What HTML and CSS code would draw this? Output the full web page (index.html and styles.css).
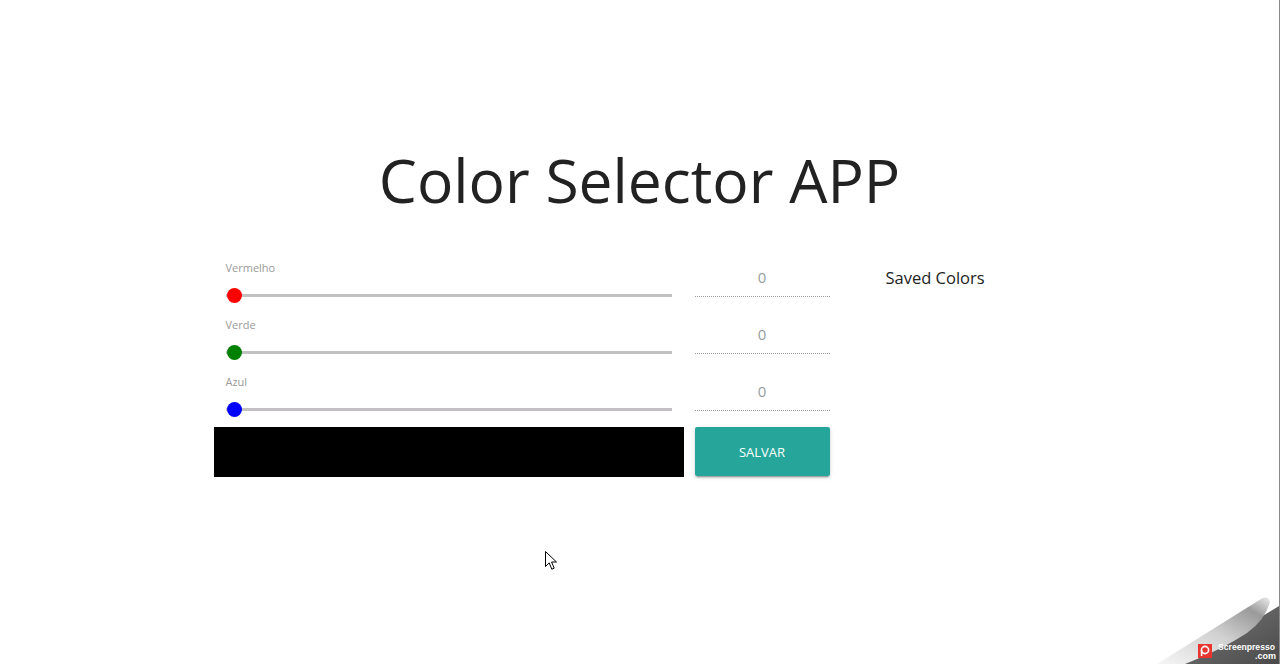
FILE: index.html
```html
<!DOCTYPE html>
<html lang="pt">
<head>
<meta charset="utf-8">
<title>Color Selector APP</title>
<link rel="stylesheet" href="styles.css">
</head>
<body>
<div class="page">
  <div class="container">
    <h1 class="title">Color Selector APP</h1>
    <div class="row">
      <div class="col-sliders">
        <div class="slider-group">
          <div class="slider-label">Vermelho</div>
          <div class="track"><span class="thumb thumb-red"></span></div>
        </div>
        <div class="slider-group">
          <div class="slider-label">Verde</div>
          <div class="track"><span class="thumb thumb-green"></span></div>
        </div>
        <div class="slider-group">
          <div class="slider-label">Azul</div>
          <div class="track"><span class="thumb thumb-blue"></span></div>
        </div>
        <div class="preview"></div>
      </div>
      <div class="col-inputs">
        <div class="input-group"><div class="num-input">0</div></div>
        <div class="input-group"><div class="num-input">0</div></div>
        <div class="input-group"><div class="num-input">0</div></div>
        <button class="btn-save">SALVAR</button>
      </div>
      <div class="col-saved">
        <div class="saved-title">Saved Colors</div>
      </div>
    </div>
  </div>

  <svg class="cursor" width="13" height="20" viewBox="0 0 13 20">
    <path d="M0.5 0.5 L0.5 15.5 L4.2 11.9 L6.8 18.2 L9.2 17.2 L6.6 11 L11.5 11 Z" fill="#fff" stroke="#000" stroke-width="1"/>
  </svg>

  <svg class="curl" width="130" height="74" viewBox="0 0 130 74">
    <defs>
      <linearGradient id="dark" x1="0" y1="0" x2="1" y2="1">
        <stop offset="0" stop-color="#7a7a7a"/>
        <stop offset="1" stop-color="#4a4a4a"/>
      </linearGradient>
      <linearGradient id="paper" x1="0" y1="1" x2="1" y2="0">
        <stop offset="0" stop-color="#f6f6f6"/>
        <stop offset="0.5" stop-color="#d0d0d0"/>
        <stop offset="0.82" stop-color="#9a9a9a"/>
        <stop offset="1" stop-color="#ececec"/>
      </linearGradient>
    </defs>
    <path d="M34 74 L130 16 L130 74 Z" fill="url(#dark)"/>
    <path d="M8 74 L112 9 Q119 5 121 12 Q116 30 98 43 Q72 60 36 74 Z" fill="url(#paper)"/>
    <rect x="49" y="54" width="14" height="14" fill="#e8352f"/>
    <circle cx="56" cy="60" r="3.6" fill="none" stroke="#fff" stroke-width="1.6"/>
    <line x1="52.6" y1="60" x2="52.6" y2="66" stroke="#fff" stroke-width="1.6"/>
    <text x="69" y="60" class="curl-text" textLength="57" lengthAdjust="spacingAndGlyphs">Screenpresso</text>
    <text x="127" y="69" class="curl-text" text-anchor="end">.com</text>
  </svg>
</div>
</body>
</html>
```
FILE: styles.css
```css
html, body {
  margin: 0;
  padding: 0;
  background: #fff;
}

body {
  font-family: "Open Sans", "Noto Sans", sans-serif;
  color: #222;
}

.page {
  position: relative;
  width: 1280px;
  height: 664px;
  box-sizing: border-box;
  border-right: 1px solid #8a8a8a;
  overflow: hidden;
}

.container {
  width: 896px;
  margin: 0 auto;
}

.title {
  margin: 140px 0 0;
  font-size: 60.5px;
  line-height: 80px;
  font-weight: 400;
  text-align: center;
  color: #222;
}

.row {
  display: flex;
  margin-top: 36px;
  padding-left: 22px;
}

.col-sliders {
  width: 470px;
}

.slider-group {
  height: 57px;
  padding: 0 12px;
}

.slider-label {
  font-size: 11px;
  line-height: 24px;
  color: #9a9a9a;
}

.track {
  position: relative;
  margin-top: 14px;
  height: 3px;
  background: #c2c0c2;
}

.thumb {
  position: absolute;
  left: 1px;
  top: -6px;
  width: 15px;
  height: 15px;
  border-radius: 50%;
}

.thumb-red { background: #ff0000; }
.thumb-green { background: #008000; }
.thumb-blue { background: #0000ff; }

.preview {
  height: 50px;
  background: #000;
}

.col-inputs {
  width: 135px;
  margin-left: 11px;
}

.input-group {
  height: 57px;
}

.num-input {
  height: 40px;
  line-height: 42px;
  border-bottom: 1px dotted #9a9a9a;
  text-align: center;
  font-size: 15px;
  color: #94a0a0;
}

.btn-save {
  display: block;
  width: 135px;
  height: 49px;
  border: none;
  border-radius: 2px;
  background: #26a69a;
  color: #fff;
  font-family: "Open Sans", "Noto Sans", sans-serif;
  font-size: 13px;
  padding: 0;
  box-shadow: 0 2px 2px 0 rgba(0,0,0,0.14), 0 1px 5px 0 rgba(0,0,0,0.12), 0 3px 1px -2px rgba(0,0,0,0.2);
}

.col-saved {
  margin-left: 56px;
}

.saved-title {
  font-size: 16.5px;
  line-height: 44px;
  color: #222;
}

.cursor {
  position: absolute;
  left: 545px;
  top: 551px;
}

.curl {
  position: absolute;
  right: 0;
  bottom: 0;
}

.curl-text {
  font-family: "Liberation Sans", sans-serif;
  font-size: 9px;
  font-weight: bold;
  fill: #fff;
}
```
